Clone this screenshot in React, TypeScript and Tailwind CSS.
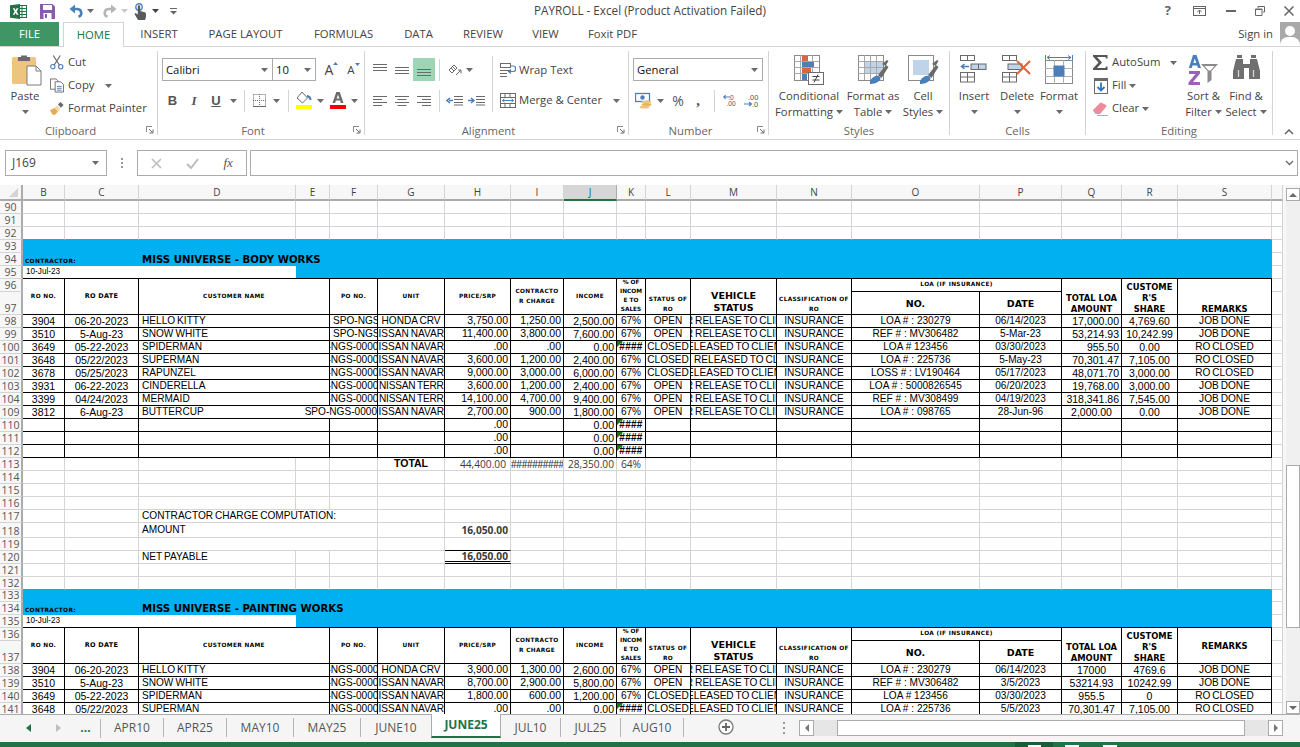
import React from "react";

const Caret = ({ c = "#6a6a6a" }: { c?: string }) => (
  <svg width="7" height="4" viewBox="0 0 7 4" className="shrink-0"><path d="M0 0h7L3.5 4z" fill={c} /></svg>
);
const Launcher = () => (
  <svg width="8" height="8" viewBox="0 0 8 8" className="absolute right-[3px] bottom-[1px]"><path d="M.5 6V.5H6" fill="none" stroke="#8a8a8a" /><path d="M3 3l3.5 3.5M7 3.5V7H3.5" fill="none" stroke="#6a6a6a" /></svg>
);
const Sep = ({ h = "h-[22px]" }: { h?: string }) => <div className={`${h} w-px bg-[#d4d4d4]`} />;

const ExcelLogo = () => (
  <svg width="17" height="15" viewBox="0 0 17 15"><rect x="8" y="1.5" width="8.5" height="12" fill="#fff" stroke="#217346" /><path d="M8 4.5h8M8 7.5h8M8 10.5h8M12 2v11" stroke="#217346" /><path d="M0 1.2L10 0v15L0 13.8z" fill="#217346" /><path d="M2.8 4.2h1.9l.9 2 1-2h1.8L6.7 7.5l1.8 3.3H6.600l-1-2.100-1 2.100H2.800l1.800-3.300z" fill="#fff" /></svg>
);
const SaveIcon = () => (
  <svg width="15" height="15" viewBox="0 0 15 15"><path d="M0 0h12.500L15 2.500V15H0z" fill="#8b5bab" /><rect x="3" y="1" width="9" height="5" fill="#fff" /><rect x="3.500" y="9" width="8" height="6" fill="#fff" /><rect x="5" y="10" width="2" height="4" fill="#8b5bab" /></svg>
);
const Undo = ({ c, flip }: { c: string; flip?: boolean }) => (
  <svg width="14" height="15" viewBox="0 0 14 15" className={flip ? "-scale-x-100" : ""}><path d="M3 5h5.500a4 4 0 0 1 1 7.800" fill="none" stroke={c} strokeWidth="2.600" /><path d="M6 .5v9L.5 5z" fill={c} /></svg>
);
const Touch = () => (
  <svg width="14" height="17" viewBox="0 0 14 17"><circle cx="6" cy="4" r="3.200" fill="none" stroke="#4a86c5" strokeWidth="1.400" /><path d="M4.800 3.500a1.200 1.200 0 0 1 2.400 0V8l4.500 1.200c1 .3 1.300 1 1.300 2V14l-1 3H5L1.500 11l1-1 2.300 1.500z" fill="#5a5a5a" /></svg>
);

const PasteIcon = () => (
  <svg width="30" height="32" viewBox="0 0 30 32"><rect x="0" y="3" width="24" height="27" rx="1.500" fill="#edc57f" /><path d="M6 3h3V1.500h6V3h3v4H6z" fill="#6a6a6a" /><path d="M15 12h9l5 5v14H15z" fill="#fff" stroke="#7a7a7a" /><path d="M24 12v5h5" fill="none" stroke="#7a7a7a" /></svg>
);
const CutIcon = () => (
  <svg width="15" height="15" viewBox="0 0 15 15"><circle cx="3" cy="12" r="2.300" fill="none" stroke="#4a7fba" strokeWidth="1.200" /><circle cx="11.500" cy="12" r="2.300" fill="none" stroke="#4a7fba" strokeWidth="1.200" /><path d="M4.500 10.200L11 0M10 10.200L3.500 0" stroke="#6a6a6a" strokeWidth="1.300" /></svg>
);
const CopyIcon = () => (
  <svg width="15" height="15" viewBox="0 0 15 15"><path d="M.5.500h6l2 2v9h-8z" fill="#fff" stroke="#6a6a6a" /><path d="M5.500 3.500h6l3 3v8h-9z" fill="#fff" stroke="#6a6a6a" /><path d="M7.500 8.500h5M7.500 10.500h5M7.500 12.500h5" stroke="#4a7fba" /></svg>
);
const BrushIcon = () => (
  <svg width="16" height="15" viewBox="0 0 16 15"><path d="M9 3l3-3 3.500 3.500-3 3z" fill="#6a6a6a" /><path d="M8 4l4 4-3 3-4-4z" fill="#f0d9a8" /><path d="M5 7l4 4-3 3.500H3L0 9.500z" fill="#e9a94e" /></svg>
);
const FillIcon = () => (
  <svg width="17" height="17" viewBox="0 0 17 17"><path d="M6 0l5.500 6-5 5L1 6z" fill="#fff" stroke="#6a6a6a" /><path d="M11 3c3 .5 4.500 2 4.500 5h-2c0-1.500-1-2.500-2.500-3z" fill="#4a7fba" /><rect x="0" y="13" width="16" height="4" fill="#ffff00" /></svg>
);
const FontColor = () => (
  <svg width="16" height="17" viewBox="0 0 16 17"><path d="M6.300 0h3.400L13.500 11h-2.600l-.8-2.500H5.900L5.100 11H2.500zM6.600 6.500h2.800L8 2.500z" fill="#6a6a6a" /><rect x="0" y="13" width="16" height="4" fill="#ff0000" /></svg>
);
const BorderIcon = () => (
  <svg width="13" height="13" viewBox="0 0 13 13"><path d="M.5.500h12v12M.5.500v12M6.500 0v13M0 6.500h13" fill="none" stroke="#6a6a6a" strokeDasharray="1 1" /><path d="M0 12.500h13" stroke="#6a6a6a" /></svg>
);
const Lines = ({ a }: { a: "l" | "c" | "r" }) => {
  const s = [14, 9, 14, 9];
  return (
    <svg width="14" height="12" viewBox="0 0 14 12">
      {s.map((w, i) => {
        const x = a === "l" ? 0 : a === "r" ? 14 - w : (14 - w) / 2;
        return <path key={i} d={`M${x} ${i * 3 + 1.5}h${w}`} stroke="#6a6a6a" />;
      })}
    </svg>
  );
};
const VLines = ({ n }: { n: number }) => (
  <svg width="14" height="12" viewBox="0 0 14 12">
    {Array.from({ length: 3 }).map((_, i) => <path key={i} d={`M0 ${n + i * 3 + 0.5}h14`} stroke="#6a6a6a" />)}
  </svg>
);
const Indent = ({ out }: { out?: boolean }) => (
  <svg width="17" height="11" viewBox="0 0 17 11"><path d="M8 1.500h9M8 4.500h9M8 7.500h9M8 10h9" stroke="#6a6a6a" /><path d={out ? "M7 5.500H3M4 3L1 5.500 4 8" : "M0 5.500h5M3 3l3 2.500L3 8"} stroke="#4a7fba" strokeWidth="1.500" fill="none" /></svg>
);
const Orient = () => (
  <svg width="16" height="15" viewBox="0 0 16 15"><path d="M2 8l5-5 3 3-5 5z" fill="#fff" stroke="#6a6a6a" /><path d="M4 6l3 3M5.500 4.500l3 3" stroke="#6a6a6a" /><path d="M9 13l5-5M14 8v3.500M14 8h-3" stroke="#6a6a6a" fill="none" /></svg>
);
const WrapIcon = () => (
  <svg width="16" height="15" viewBox="0 0 16 15"><rect x=".5" y=".5" width="10" height="4" fill="#fff" stroke="#6a6a6a" /><path d="M0 7.500h11M0 10.500h7M0 13.500h7" stroke="#6a6a6a" /><path d="M11 3h2.500q2 0 2 2v1.500q0 2-2 2H9M11 6.500L8.500 8.500l2.500 2" fill="none" stroke="#4a7fba" strokeWidth="1.200" /></svg>
);
const MergeIcon = () => (
  <svg width="16" height="15" viewBox="0 0 16 15"><rect x=".5" y=".5" width="15" height="14" fill="#fff" stroke="#6a6a6a" /><path d="M0 4.500h16M0 10.500h16M5 0v4.500M10 0v4.500M5 10.500V15M10 10.500V15" stroke="#6a6a6a" /><path d="M2.500 7.500h11M4.500 5.800L2.500 7.500l2 1.700M11.500 5.800l2 1.700-2 1.700" fill="none" stroke="#4a7fba" /></svg>
);
const Currency = () => (
  <svg width="18" height="17" viewBox="0 0 18 17"><rect x=".5" y="1.500" width="14" height="8" fill="#fff" stroke="#4a7fba" strokeWidth="1.300" /><circle cx="7.500" cy="5.500" r="2.200" fill="#4a7fba" /><ellipse cx="11.500" cy="10" rx="5" ry="1.600" fill="#edc57f" /><ellipse cx="11.500" cy="12.500" rx="5" ry="1.600" fill="#e9b45c" /><ellipse cx="9.500" cy="15" rx="5" ry="1.600" fill="#edc57f" /></svg>
);
const Dec = ({ more }: { more?: boolean }) => (
  <svg width="16" height="15" viewBox="0 0 16 15">
    <text x={more ? 4 : 6} y="6.500" fontSize="7.500" fontFamily="Liberation Sans, sans-serif" fill="#555">{more ? ".00" : ".0"}</text>
    <text x={more ? 8 : 4} y="14" fontSize="7.500" fontFamily="Liberation Sans, sans-serif" fill="#555">{more ? ".0" : ".00"}</text>
    <path d={more ? "M0 11h7M5 9l2.500 2L5 13" : "M8 3.500H1M3 1.500L.8 3.500 3 5.500"} stroke="#4a7fba" strokeWidth="1.200" fill="none" />
  </svg>
);
const CellGrid = ({ shade }: { shade?: string }) => (
  <g>
    <rect x=".5" y=".5" width="25" height="25" fill="#fff" stroke="#8a8a8a" />
    {shade && <path d={shade} fill="#bfd3e9" />}
    <path d="M0 6.500h25M0 12.500h25M0 18.500h25M6.500 0v25M12.500 0v25M18.500 0v25" stroke="#a8a8a8" />
  </g>
);
const Conditional = () => (
  <svg width="31" height="31" viewBox="0 0 31 31">
    <CellGrid />
    <rect x="8" y="1" width="6" height="5" fill="#e0643a" />
    <rect x="8" y="7" width="12" height="5" fill="#4a7fba" />
    <rect x="8" y="13" width="9" height="5" fill="#e0643a" />
    <rect x="8" y="19" width="5" height="6" fill="#4a7fba" />
    <rect x="14.500" y="17.500" width="15" height="12" fill="#fff" stroke="#6a6a6a" />
    <path d="M18.500 21.500h7M18.500 25h7M24 19.500l-4 8" stroke="#444" />
  </svg>
);
const Brush = () => (
  <g>
    <path d="M20 20l8-10 2.500 2-7 11z" fill="#6a6a6a" />
    <path d="M24 9l5-4 1.500 1-3 5z" fill="#6a6a6a" />
    <path d="M12 26c2-4 6-6 9-5 2 1 2 4 0 5-2 2-5 3-9 3z" fill="#4a7fba" />
  </g>
);
const TableStyle = () => (
  <svg width="31" height="31" viewBox="0 0 31 31"><CellGrid shade="M6 6h19v13H6z" /><Brush /></svg>
);
const CellStyle = () => (
  <svg width="31" height="31" viewBox="0 0 31 31"><rect x=".5" y=".5" width="25" height="25" fill="#fff" stroke="#8a8a8a" /><rect x="5" y="5" width="16" height="15" fill="#bfd3e9" /><Brush /></svg>
);
const InsertIcon = () => (
  <svg width="28" height="28" viewBox="0 0 28 28"><rect x=".5" y=".5" width="14" height="5" fill="#fff" stroke="#6a6a6a" /><path d="M7.500 0v6" stroke="#6a6a6a" /><rect x="11" y="9" width="15" height="5.500" fill="#bfd3e9" stroke="#6a6a6a" /><path d="M18.500 9v5.500" stroke="#6a6a6a" /><path d="M9 11.500H2M4.500 9L1.500 11.500 4.500 14" fill="none" stroke="#4a7fba" strokeWidth="1.500" /><rect x=".5" y="17.500" width="14" height="9.500" fill="#fff" stroke="#6a6a6a" /><path d="M0 22h15M7.500 17v10" stroke="#6a6a6a" /></svg>
);
const DeleteIcon = () => (
  <svg width="31" height="28" viewBox="0 0 31 28"><rect x=".5" y=".5" width="14" height="5" fill="#fff" stroke="#6a6a6a" /><path d="M7.500 0v6" stroke="#6a6a6a" /><rect x="6" y="9" width="14" height="5.500" fill="#bfd3e9" stroke="#6a6a6a" /><rect x=".5" y="17.500" width="14" height="9.500" fill="#fff" stroke="#6a6a6a" /><path d="M0 22h15M7.500 17v10" stroke="#6a6a6a" /><path d="M15 6l13 13M28 6L15 19" stroke="#e0643a" strokeWidth="2" /></svg>
);
const FormatIcon = () => (
  <svg width="28" height="31" viewBox="0 0 28 31"><path d="M.5 0v5M27.500 0v5M2 2.500h24M5 .5L2 2.500l3 2M23 .5l3 2-3 2" fill="none" stroke="#4a7fba" /><rect x=".5" y="5.500" width="27" height="23" fill="#fff" stroke="#8a8a8a" /><path d="M9.500 5v24M18.500 5v24M0 13.500h28M0 21.500h28" stroke="#b0b0b0" /><rect x="8.500" y="10.500" width="11" height="11" fill="#4a7fba" /></svg>
);
const Sigma = () => (
  <svg width="15" height="15" viewBox="0 0 15 15"><path d="M0 0h14.500v3.500h-1.500L12.500 2H4l5 5.500L4 13h8.500l.5-1.500h1.500V15H0v-1.500L5.500 7.500 0 1.500z" fill="#555" /></svg>
);
const FillDown = () => (
  <svg width="14" height="16" viewBox="0 0 14 16"><rect x=".5" y=".5" width="13" height="15" fill="#fff" stroke="#6a6a6a" /><rect x="0" y="0" width="14" height="3" fill="#6a6a6a" /><path d="M7 4.500v8M3.500 9L7 12.500 10.500 9" fill="none" stroke="#2f76bd" strokeWidth="1.800" /></svg>
);
const Eraser = () => (
  <svg width="15" height="14" viewBox="0 0 15 14"><path d="M0 8l7-7q1-1 2 0l4 2q1 1 0 2L7 12H3z" fill="#ef8a9a" /><path d="M0 8l4 3-1 1zM4 13.500h11" stroke="#b0b0b0" fill="none" /></svg>
);
const SortIcon = () => (
  <svg width="31" height="31" viewBox="0 0 31 31"><path d="M5 0h3.500L13 13h-3l-.8-2.500H4.500L3.700 13H.8zM5.300 8h3L6.800 3.500z" fill="#4a7fba" /><path d="M1 16h11v2.500L5 27h7v3H.5v-2.500L7.500 19H1z" fill="#9a63b5" /><path d="M13 9h17l-6.500 7v9l-4 3V16z" fill="#8a8a8a" /><path d="M16.500 11h10l-4 4.500h-2z" fill="#fff" /></svg>
);
const Binoc = () => (
  <svg width="27" height="24" viewBox="0 0 27 24"><path d="M4 0h5v3H4zM18 0h5v3h-5z" fill="#6f6f6f" /><path d="M3 4h7v5h7V4h7l3 12v8H16V13h-5v11H0v-8z" fill="#6f6f6f" /><path d="M5.500 15v7M20.500 15v7" stroke="#d4d4d4" strokeWidth="1.300" /></svg>
);

const Small = ({ icon, label, caret, w = "w-[15px]", mr = "mr-[4px]", ml = "ml-0" }: { icon: React.ReactNode; label: string; caret?: boolean; w?: string; mr?: string; ml?: string }) => (
  <div className="flex h-[23px] items-center whitespace-nowrap">
    <div className={`flex ${w} ${mr} justify-center`}>{icon}</div>
    <span>{label}</span>
    {caret && <span className={`${ml} flex`}><Caret /></span>}
  </div>
);
const Large = ({ icon, l1, l2, w }: { icon: React.ReactNode; l1: string; l2?: string; w: string }) => (
  <div className={`flex ${w} shrink-0 flex-col items-center whitespace-nowrap`}>
    <div className="flex h-[37px] items-start justify-center pt-[4px]">{icon}</div>
    <div className="h-[16px] leading-[16px]">{l1}</div>
    <div className="flex h-[16px] items-center gap-[3px] leading-[16px]">{l2 && <span>{l2}</span>}<Caret /></div>
  </div>
);
const Group = ({ w, label, launcher, children }: { w: string; label: string; launcher?: boolean; children: React.ReactNode }) => (
  <div className={`relative flex ${w} shrink-0 flex-col border-r border-[#d4d4d4]`}>
    <div className="flex h-[72px] items-start">{children}</div>
    <div className={`h-[12px] text-center leading-[16px] text-[#666] ${launcher ? "pr-[16px]" : ""}`}>{label}</div>
    {launcher && <Launcher />}
  </div>
);
const Slot = ({ w, children, cls = "" }: { w: string; children?: React.ReactNode; cls?: string }) => (
  <div className={`flex ${w} h-[23px] shrink-0 items-center justify-center ${cls}`}>{children}</div>
);
const Combo = ({ w, text }: { w: string; text: string }) => (
  <div className={`flex ${w} h-[23px] shrink-0 items-center justify-between border border-[#ababab] bg-white pt-px pr-[4px] pl-[3px] text-[#111]`}>
    <span>{text}</span><Caret />
  </div>
);
const TabT = ({ w, t }: { w: string; t: string }) => <div className={`${w} shrink-0 text-center`}>{t}</div>;

/* ---- Sheet ---- */
const txt = "text-[10.1px] leading-none text-black font-['Liberation_Sans',sans-serif]";
const hd6 = "font-['DejaVu_Sans',sans-serif] font-bold text-[5.8px] leading-[9.5px] tracking-[0.35px] text-center text-black";
const hd8 = "font-['DejaVu_Sans',sans-serif] font-bold text-[8.4px] leading-[11px] text-center text-black -mb-px";
const hd9 = "font-['DejaVu_Sans',sans-serif] font-bold text-[9.5px] leading-[12px] text-center text-black";
const ws = "[word-spacing:-0.8px]";
const numCell = "!text-[10.5px]";

const RH = ({ n }: { n: number }) => (
  <div className="flex items-end justify-center overflow-hidden border-r-2 border-b border-r-[#ababab] border-b-[#d4d4d4] bg-[#f7f7f7] font-['Open_Sans',sans-serif] text-[10.5px] leading-[12px] text-[#555]">{n}</div>
);
const G = ({ cls = "", children }: { cls?: string; children?: React.ReactNode }) => (
  <div className={`flex min-w-0 items-center overflow-hidden border-r border-b border-[#d4d4d4] whitespace-nowrap ${txt} ${cls}`}>{children}</div>
);
const K = ({ cls = "", children }: { cls?: string; children?: React.ReactNode }) => (
  <div className={`flex min-w-0 items-center overflow-hidden border-r border-b border-black whitespace-nowrap ${txt} ${cls}`}>{children}</div>
);
const Tri = () => <svg width="6" height="6" viewBox="0 0 6 6" className="absolute top-0 left-0"><path d="M0 0h6L0 6z" fill="#107c10" /></svg>;
const Hash = () => (
  <K cls="relative justify-center pt-px font-bold tracking-[0.2px]"><Tri />####</K>
);

const ColHead = ({ t, cls = "" }: { t: string; cls?: string }) => (
  <div className={`flex items-center justify-center border-r border-b-2 border-r-[#d4d4d4] border-b-[#ababab] bg-[#f7f7f7] font-['Open_Sans',sans-serif] text-[10px] text-[#444] ${cls}`}>{t}</div>
);
const Plain = ({ n, tail }: { n: number; tail?: boolean }) => (
  <>
    <RH n={n} />
    {Array.from({ length: 19 }).map((_, i) => <G key={i} cls={tail && i < 18 ? "border-b-[#00b0f0]" : ""} />)}
  </>
);
const Banner = ({ n1, n2, n3, title }: { n1: number; n2: number; n3: number; title: string }) => (
  <>
    <RH n={n1} />
    <div className="col-span-18 bg-[#00b0f0]" />
    <G />
    <RH n={n2} />
    <div className="col-span-2 flex items-end overflow-hidden bg-[#00b0f0] pb-[1px] pl-[2px] font-['DejaVu_Sans',sans-serif] text-[5.9px] leading-[8px] font-bold tracking-[0.3px] whitespace-nowrap text-black">CONTRACTOR:</div>
    <div className="col-span-16 flex items-center bg-[#00b0f0] pl-[3px] font-['DejaVu_Sans',sans-serif] text-[10.2px] font-bold whitespace-nowrap text-black">{title}</div>
    <G />
    <RH n={n3} />
    <div className="col-span-3 flex items-center border-b border-black bg-white pl-[3px] font-['Liberation_Sans',sans-serif] text-[8.2px] text-black">10-Jul-23</div>
    <div className="col-span-15 border-b border-black bg-[#00b0f0]" />
    <G />
  </>
);
const Header = ({ n1, n2, remarksCenter }: { n1: number; n2: number; remarksCenter?: boolean }) => {
  const c = "row-span-2 justify-center whitespace-normal";
  return (
    <>
      <RH n={n1} />
      <K cls={c}><span className={hd6}>RO NO.</span></K>
      <K cls={c}><span className="font-['DejaVu_Sans',sans-serif] text-[6.5px] font-bold tracking-[0.3px] text-black">RO DATE</span></K>
      <K cls={`${c} col-span-2`}><span className={hd6}>CUSTOMER NAME</span></K>
      <K cls={c}><span className={hd6}>PO NO.</span></K>
      <K cls={c}><span className={hd6}>UNIT</span></K>
      <K cls={c}><span className={hd6}>PRICE/SRP</span></K>
      <K cls={c}><span className={hd6}>CONTRACTO<br />R CHARGE</span></K>
      <K cls={c}><span className={hd6}>INCOME</span></K>
      <K cls={`${c} !items-end`}><span className="text-center font-['DejaVu_Sans',sans-serif] text-[5.8px] leading-[8.9px] font-bold text-black">% OF<br />INCOM<br />E TO<br />SALES</span></K>
      <K cls={`${c} !items-end`}><span className={hd6}>STATUS OF<br />RO</span></K>
      <K cls={`${c} !items-end`}><span className={hd9}>VEHICLE<br />STATUS</span></K>
      <K cls={`${c} !items-end`}><span className={hd6}>CLASSIFICATION OF<br />RO</span></K>
      <K cls="col-span-2 justify-center"><span className={hd6}>LOA (IF INSURANCE)</span></K>
      <K cls={`${c} !items-end`}><span className={hd8}>TOTAL LOA<br />AMOUNT</span></K>
      <K cls={`${c} !items-end`}><span className={hd8}>CUSTOME<br />R'S<br />SHARE</span></K>
      <K cls={`${c} ${remarksCenter ? "" : "!items-end"}`}><span className={hd8}>REMARKS</span></K>
      <G />
      <RH n={n2} />
      <K cls="justify-center pt-[2px]"><span className={hd9}>NO.</span></K>
      <K cls="justify-center pt-[2px]"><span className={hd9}>DATE</span></K>
      <G />
    </>
  );
};
type D = { n: number; v: string[] };
const Row = ({ n, v }: D) => {
  const [b, c, d, f, g, h, i, j, k, l, m, n2, o, p, q, r, s] = v;
  return (
    <>
      <RH n={n} />
      <K cls={`justify-center pt-px ${numCell}`}>{b}</K>
      <K cls={`justify-center pt-px ${numCell}`}>{c}</K>
      {f === "@R" ? (
        <K cls={`col-span-3 justify-between pt-px pl-[3px] ${ws}`}><span>{d}</span><span>SPO-NGS-0000</span></K>
      ) : (
        <>
          <K cls={`col-span-2 pt-px pl-[3px] ${ws}`}>{d}</K>
          {f === "@L" ? <K cls="pt-px pl-[3px]">SPO-NGS-00001234</K> : <K cls="justify-center pt-px">{f}</K>}
        </>
      )}
      <K cls={`pt-px ${ws} ${g.startsWith("@") ? "pl-[1px] tracking-[-0.2px]" : "justify-center"}`}>{g.replace("@", "")}</K>
      <K cls={`justify-end pr-[2px] pb-[2px] ${numCell}`}>{h}</K>
      <K cls={`justify-end pr-[2px] pb-[1px] ${numCell}`}>{i}</K>
      <K cls={`justify-end pt-px pr-[2px] ${numCell}`}>{j}</K>
      {k === "####" ? <Hash /> : <K cls="justify-center pt-px">{k}</K>}
      <K cls="justify-center pt-px">{l}</K>
      <K cls={`pt-px ${ws} ${m.startsWith("@") ? "pl-[3px]" : "justify-center"}`}>{m.replace("@", "")}</K>
      <K cls="justify-center pt-px">{n2}</K>
      <K cls="justify-center pt-px">{o}</K>
      <K cls="justify-center pt-px">{p}</K>
      <K cls={`pt-px ${numCell} ${q.startsWith("=") ? "justify-center" : "justify-end pr-[2px]"}`}>{q.replace("=", "")}</K>
      <K cls={`justify-center pt-px ${numCell}`}>{r}</K>
      <K cls={`justify-center pt-px ${ws}`}>{s}</K>
      <G />
    </>
  );
};
const FOR = "FOR RELEASE TO CLIENT", REL = "RELEASED TO CLIENT", INS = "INSURANCE", NGS = "SPO-NGS-00001234", NAV = "NISSAN NAVARA", TER = "NISSAN TERRA", DONE = "JOB DONE", CL = "RO CLOSED";
const A: D[] = [
  { n: 98, v: ["3904", "06-20-2023", "HELLO KITTY", "@L", "HONDA CRV", "3,750.00", "1,250.00", "2,500.00", "67%", "OPEN", FOR, INS, "LOA # : 230279", "06/14/2023", "17,000.00", "4,769.60", DONE] },
  { n: 99, v: ["3510", "5-Aug-23", "SNOW WHITE", "@L", NAV, "11,400.00", "3,800.00", "7,600.00", "67%", "OPEN", FOR, INS, "REF # : MV306482", "5-Mar-23", "53,214.93", "10,242.99", DONE] },
  { n: 100, v: ["3649", "05-22-2023", "SPIDERMAN", NGS, NAV, ".00", ".00", "0.00", "####", "CLOSED", REL, INS, "LOA # 123456", "03/30/2023", "955.50", "0.00", CL] },
  { n: 101, v: ["3648", "05/22/2023", "SUPERMAN", NGS, NAV, "3,600.00", "1,200.00", "2,400.00", "67%", "CLOSED", "@" + REL, INS, "LOA # : 225736", "5-May-23", "70,301.47", "7,105.00", CL] },
  { n: 102, v: ["3678", "05/25/2023", "RAPUNZEL", NGS, NAV, "9,000.00", "3,000.00", "6,000.00", "67%", "CLOSED", REL, INS, "LOSS # : LV190464", "05/17/2023", "48,071.70", "3,000.00", CL] },
  { n: 103, v: ["3931", "06-22-2023", "CINDERELLA", NGS, "@" + TER, "3,600.00", "1,200.00", "2,400.00", "67%", "OPEN", FOR, INS, "LOA # : 5000826545", "06/20/2023", "19,768.00", "3,000.00", DONE] },
  { n: 104, v: ["3399", "04/24/2023", "MERMAID", NGS, "@" + TER, "14,100.00", "4,700.00", "9,400.00", "67%", "OPEN", FOR, INS, "REF # : MV308499", "04/19/2023", "318,341.86", "7,545.00", DONE] },
  { n: 109, v: ["3812", "6-Aug-23", "BUTTERCUP", "@R", NAV, "2,700.00", "900.00", "1,800.00", "67%", "OPEN", FOR, INS, "LOA # : 098765", "28-Jun-96", "=2,000.00", "0.00", DONE] },
  { n: 110, v: ["", "", "", "", "", ".00", "", "0.00", "####", "", "", "", "", "", "", "", ""] },
  { n: 111, v: ["", "", "", "", "", ".00", "", "0.00", "####", "", "", "", "", "", "", "", ""] },
  { n: 112, v: ["", "", "", "", "", ".00", "", "0.00", "####", "", "", "", "", "", "", "", ""] },
];
const B: D[] = [
  { n: 138, v: ["3904", "06-20-2023", "HELLO KITTY", NGS, "HONDA CRV", "3,900.00", "1,300.00", "2,600.00", "67%", "OPEN", FOR, INS, "LOA # : 230279", "06/14/2023", "=17000", "4769.6", DONE] },
  { n: 139, v: ["3510", "5-Aug-23", "SNOW WHITE", NGS, NAV, "8,700.00", "2,900.00", "5,800.00", "67%", "OPEN", FOR, INS, "REF # : MV306482", "3/5/2023", "=53214.93", "10242.99", DONE] },
  { n: 140, v: ["3649", "05-22-2023", "SPIDERMAN", NGS, NAV, "1,800.00", "600.00", "1,200.00", "67%", "CLOSED", REL, INS, "LOA # 123456", "03/30/2023", "=955.5", "0", CL] },
  { n: 141, v: ["3648", "05/22/2023", "SUPERMAN", NGS, NAV, ".00", ".00", "0.00", "####", "CLOSED", REL, INS, "LOA # : 225736", "5/5/2023", "=70,301.47", "7,105.00", CL] },
];
const num = "font-['Open_Sans',sans-serif] !text-[10.2px] !text-[#3a3a3a]";
const Blanks = ({ n }: { n: number }) => <>{Array.from({ length: n }).map((_, i) => <G key={i} />)}</>;

const Sheet = () => (
  <div className="grid h-[529px] w-[1283px] shrink-0 grid-cols-[23px_42px_74px_157px_34px_48px_67px_66px_53px_53px_29px_45px_86px_75px_128px_82px_60px_56px_94px_11px] grid-rows-[16px_repeat(7,13px)_23px_repeat(16,13px)_15px_repeat(4,13px)_12px_repeat(3,13px)_23px_repeat(4,13px)] overflow-hidden bg-white">
    <div className="flex items-end justify-end border-r-2 border-b-2 border-r-[#ababab] border-b-[#ababab] bg-[#f7f7f7] pr-[3px] pb-[2px]">
      <svg width="9" height="9" viewBox="0 0 9 9"><path d="M9 0v9H0z" fill="#d4d4d4" /></svg>
    </div>
    {["B", "C", "D", "E", "F", "G", "H", "I"].map((t) => <ColHead key={t} t={t} />)}
    <div className="flex items-center justify-center border-r border-b-2 border-r-[#ababab] border-b-[#217346] bg-[#d6d6d6] font-['Open_Sans',sans-serif] text-[10px] text-[#217346]">J</div>
    {["K", "L", "M", "N", "O", "P", "Q", "R", "S"].map((t) => <ColHead key={t} t={t} />)}
    <ColHead t="" />

    <Plain n={90} /><Plain n={91} /><Plain n={92} tail />
    <Banner n1={93} n2={94} n3={95} title="MISS UNIVERSE - BODY WORKS" />
    <Header n1={96} n2={97} />
    {A.map((r) => <Row key={r.n} {...r} />)}

    <RH n={113} />
    <Blanks n={5} />
    <G cls="justify-center pb-[1px] font-['DejaVu_Sans',sans-serif] !text-[10.5px] font-bold">TOTAL</G>
    <G cls={`justify-end pr-[4px] ${num}`}>44,400.00</G>
    <G cls={`justify-center ${num} !text-[9px] tracking-[-1.3px]`}>##########</G>
    <G cls={`justify-end pr-[2px] ${num}`}>28,350.00</G>
    <G cls={`justify-center ${num}`}>64%</G>
    <Blanks n={9} />

    <Plain n={114} /><Plain n={115} /><Plain n={116} />

    <RH n={117} /><Blanks n={2} />
    <G cls={`col-span-3 pl-[3px] ${ws}`}>CONTRACTOR CHARGE COMPUTATION:</G>
    <Blanks n={14} />
    <RH n={118} /><Blanks n={2} />
    <G cls="col-span-3 pl-[3px]">AMOUNT</G>
    <G />
    <G cls={`justify-end pr-[2px] font-bold ${num}`}>16,050.00</G>
    <Blanks n={12} />
    <RH n={119} /><Blanks n={2} />
    <G cls="col-span-3" />
    <G />
    <G cls="border-b-black" />
    <Blanks n={12} />
    <RH n={120} /><Blanks n={2} />
    <G cls={`pl-[3px] ${ws}`}>NET PAYABLE</G>
    <Blanks n={3} />
    <div className={`flex items-center justify-end border-r border-b-[3px] border-r-[#d4d4d4] border-b-black pt-[2px] pr-[2px] font-bold ${num} [border-bottom-style:double]`}>16,050.00</div>
    <Blanks n={12} />
    <Plain n={121} /><Plain n={132} tail />

    <Banner n1={133} n2={134} n3={135} title="MISS UNIVERSE - PAINTING WORKS" />
    <Header n1={136} n2={137} remarksCenter />
    {B.map((r) => <Row key={r.n} {...r} />)}
  </div>
);

const VScroll = () => (
  <div className="flex w-[17px] shrink-0 flex-col bg-[#f7f7f7] pt-[3px] pl-[3px]">
    <div className="flex h-[13px] items-center justify-center border border-[#ababab] bg-white"><svg width="8" height="4" viewBox="0 0 8 4"><path d="M4 0l4 4H0z" fill="#6a6a6a" /></svg></div>
    <div className="flex flex-1 flex-col bg-[#f0f0f0]">
      <div className="h-[264px]" />
      <div className="h-[163px] border border-[#ababab] bg-white" />
      <div className="flex-1" />
    </div>
    <div className="flex h-[13px] items-center justify-center border border-[#ababab] bg-white"><svg width="8" height="4" viewBox="0 0 8 4"><path d="M0 0h8L4 4z" fill="#6a6a6a" /></svg></div>
  </div>
);

const SheetTab = ({ w, t }: { w: string; t: string }) => (
  <div className={`flex ${w} h-[19px] shrink-0 items-center justify-center border-r border-[#b5b5b5]`}>{t}</div>
);
const TabsBar = () => (
  <div className="flex h-[28px] shrink-0 items-start border-t border-[#ababab] bg-[#f5f5f5] font-['Open_Sans',sans-serif] text-[12px] text-[#555]">
    <div className="flex h-[23px] w-[101px] shrink-0 items-center pt-[3px]">
      <div className="flex w-[56px] justify-end pr-[25px]"><svg width="5" height="8" viewBox="0 0 5 8"><path d="M5 0v8L0 4z" fill="#217346" /></svg></div>
      <div className="flex w-[15px] justify-start"><svg width="5" height="8" viewBox="0 0 5 8"><path d="M0 0v8l5-4z" fill="#bdbdbd" /></svg></div>
      <div className="flex h-[19px] w-[30px] items-center justify-center border-r border-[#b5b5b5] font-bold text-[#217346]">...</div>
    </div>
    <div className="flex pt-[3px]">
      <SheetTab w="w-[63px]" t="APR10" />
      <SheetTab w="w-[63px]" t="APR25" />
      <SheetTab w="w-[67px]" t="MAY10" />
      <SheetTab w="w-[67px]" t="MAY25" />
      <div className="flex h-[19px] w-[70px] shrink-0 items-center justify-center">JUNE10</div>
    </div>
    <div className="-mt-px flex h-[24px] w-[70px] shrink-0 items-center justify-center border-x border-b-2 border-x-[#ababab] border-b-[#217346] bg-white font-bold text-[#217346]">JUNE25</div>
    <div className="flex pt-[3px]">
      <SheetTab w="w-[60px]" t="JUL10" />
      <SheetTab w="w-[60px]" t="JUL25" />
      <SheetTab w="w-[63px]" t="AUG10" />
    </div>
    <div className="flex w-[84px] shrink-0 justify-center pt-[4px]">
      <svg width="16" height="16" viewBox="0 0 16 16"><circle cx="8" cy="8" r="7" fill="#fff" stroke="#777" strokeWidth="1.300" /><path d="M8 4v8M4 8h8" stroke="#666" strokeWidth="1.800" /></svg>
    </div>
    <div className="flex w-[31px] shrink-0 flex-col items-center gap-[3px] pt-[7px]">
      <div className="h-[2px] w-[2px] bg-[#999]" /><div className="h-[2px] w-[2px] bg-[#999]" /><div className="h-[2px] w-[2px] bg-[#999]" />
    </div>
    <div className="mt-[5px] flex h-[16px] w-[484px] shrink-0 bg-[#e6e6e6]">
      <div className="flex w-[15px] items-center justify-center border border-[#ababab] bg-white"><svg width="4" height="8" viewBox="0 0 4 8"><path d="M4 0v8L0 4z" fill="#777" /></svg></div>
      <div className="w-[23px]" />
      <div className="w-[408px] border border-[#ababab] bg-white" />
      <div className="w-[23px]" />
      <div className="flex w-[15px] items-center justify-center border border-[#ababab] bg-white"><svg width="4" height="8" viewBox="0 0 4 8"><path d="M0 0v8l4-4z" fill="#777" /></svg></div>
    </div>
  </div>
);

export default function App() {
  return (
    <div className="flex h-[747px] w-[1300px] flex-col overflow-hidden bg-white font-['Open_Sans',sans-serif] text-[11.300px] text-[#444]">
      {/* title bar */}
      <div className="flex h-[22px] shrink-0 items-center">
        <div className="flex w-[480px] shrink-0 items-center">
          <div className="ml-[10px] w-[30px]"><ExcelLogo /></div>
          <div className="w-[29px]"><SaveIcon /></div>
          <Undo c="#4a7fba" />
          <div className="ml-[4px] w-[16px]"><Caret /></div>
          <Undo c="#b5b5b5" flip />
          <div className="ml-[4px] w-[12px]"><Caret c="#c8c8c8" /></div>
          <Touch />
          <div className="ml-[5px] w-[14px]"><Caret c="#444" /></div>
          <svg width="7" height="7" viewBox="0 0 7 7" className="ml-[4px]"><path d="M0 .500h7" stroke="#666" /><path d="M0 3h7L3.500 6.500z" fill="#666" /></svg>
        </div>
        <div className="w-[340px] shrink-0 text-center text-[11.700px] text-[#444]">PAYROLL - Excel (Product Activation Failed)</div>
        <div className="flex flex-1 items-center justify-end">
          <span className="mr-[22px] text-[13px] font-bold text-[#666]">?</span>
          <svg width="13" height="10" viewBox="0 0 13 10" className="mr-[20px]"><rect x=".5" y=".5" width="12" height="9" fill="none" stroke="#666" /><path d="M0 2.500h13M6.500 8V4M4.500 6l2-2 2 2" fill="none" stroke="#666" /></svg>
          <svg width="10" height="2" viewBox="0 0 10 2" className="mr-[19px]"><path d="M0 1h10" stroke="#666" strokeWidth="2" /></svg>
          <svg width="10" height="10" viewBox="0 0 10 10" className="mr-[19px]"><path d="M3 2V.5h6.500V6H8M.5 3h6.500v6.500H.5z" fill="none" stroke="#666" /><path d="M1 3.500h6" stroke="#666" /></svg>
          <svg width="10" height="10" viewBox="0 0 10 10" className="mr-[6px]"><path d="M.5.500l9 9M9.500.500l-9 9" stroke="#666" strokeWidth="1.500" /></svg>
        </div>
      </div>
      {/* tabs */}
      <div className="flex h-[25px] shrink-0 items-stretch border-b border-[#d4d4d4]">
        <div className="flex w-[59px] shrink-0 items-center justify-center bg-[#409565] text-white">FILE</div>
        <div className="-mb-px ml-[4px] flex w-[61px] shrink-0 items-center justify-center border-x border-t border-[#d4d4d4] bg-white text-[#217346]">HOME</div>
        <div className="flex items-center">
          <TabT w="w-[70px]" t="INSERT" />
          <TabT w="w-[103px]" t="PAGE LAYOUT" />
          <TabT w="w-[93px]" t="FORMULAS" />
          <TabT w="w-[57px]" t="DATA" />
          <TabT w="w-[72px]" t="REVIEW" />
          <TabT w="w-[53px]" t="VIEW" />
          <TabT w="w-[81px]" t="Foxit PDF" />
        </div>
        <div className="flex flex-1 items-center justify-end">
          <span className="mr-[7px]">Sign in</span>
          <div className="h-[24px] w-[20px] overflow-hidden bg-[#a9a9a9]">
            <div className="mx-auto mt-[4px] h-[10px] w-[10px] rounded-full bg-white" />
            <div className="mx-auto mt-[1px] h-[12px] w-[20px] rounded-t-[8px] bg-white" />
          </div>
        </div>
      </div>
      {/* ribbon */}
      <div className="flex h-[93px] shrink-0 border-b border-[#d4d4d4] py-[4px]">
        <Group w="w-[158px]" label="Clipboard" launcher>
          <div className="flex w-[50px] shrink-0 flex-col items-center">
            <div className="flex h-[37px] items-start pt-[3px] pl-[3px]"><PasteIcon /></div>
            <div className="h-[16px] leading-[16px]">Paste</div>
            <div className="flex h-[16px] items-center"><Caret /></div>
          </div>
          <div className="flex flex-col">
            <Small icon={<CutIcon />} label="Cut" w="w-[14px]" />
            <Small icon={<CopyIcon />} label="Copy" w="w-[14px]" caret ml="ml-[11px]" />
            <Small icon={<BrushIcon />} label="Format Painter" w="w-[14px]" />
          </div>
        </Group>
        <Group w="w-[207px]" label="Font" launcher>
          <div className="flex flex-col pt-[7px] pl-[4px]">
            <div className="flex items-center">
              <Combo w="w-[111px]" text="Calibri" />
              <Combo w="w-[44px] -ml-px" text="10" />
              <Slot w="w-[22px] ml-[2px]"><span className="relative text-[14px] leading-none">A<svg width="5" height="3" viewBox="0 0 5 3" className="absolute -top-px -right-[5px]"><path d="M2.500 0L5 3H0z" fill="#4a7fba" /></svg></span></Slot>
              <Slot w="w-[22px]"><span className="relative text-[11.500px] leading-none">A<svg width="5" height="3" viewBox="0 0 5 3" className="absolute -top-px -right-[5px]"><path d="M0 0h5L2.500 3z" fill="#4a7fba" /></svg></span></Slot>
            </div>
            <div className="mt-[8px] flex items-center">
              <Slot w="w-[21px]" cls="font-['Liberation_Sans',sans-serif] text-[13px] font-bold text-[#555]">B</Slot>
              <Slot w="w-[22px]" cls="font-['Liberation_Serif',serif] text-[13px] font-bold text-[#555] italic">I</Slot>
              <Slot w="w-[22px]" cls="font-['Liberation_Sans',sans-serif] text-[13px] font-bold text-[#555] underline">U</Slot>
              <Slot w="w-[12px]"><Caret /></Slot>
              <Slot w="w-[10px]"><Sep /></Slot>
              <Slot w="w-[21px]"><BorderIcon /></Slot>
              <Slot w="w-[13px]"><Caret /></Slot>
              <Slot w="w-[10px]"><Sep /></Slot>
              <Slot w="w-[22px]"><FillIcon /></Slot>
              <Slot w="w-[11px]"><Caret /></Slot>
              <Slot w="w-[23px]"><FontColor /></Slot>
              <Slot w="w-[11px]"><Caret /></Slot>
            </div>
          </div>
        </Group>
        <Group w="w-[264px]" label="Alignment" launcher>
          <div className="flex flex-col pt-[7px] pl-[4px]">
            <div className="flex">
              <Slot w="w-[22px]"><VLines n={0} /></Slot>
              <Slot w="w-[22px]"><VLines n={3} /></Slot>
              <Slot w="w-[22px]" cls="bg-[#9fd5b7]"><VLines n={5} /></Slot>
              <Slot w="w-[8px]"><Sep /></Slot>
              <Slot w="w-[34px]" cls="gap-[3px]"><Orient /><Caret /></Slot>
            </div>
            <div className="mt-[8px] flex">
              <Slot w="w-[22px]"><Lines a="l" /></Slot>
              <Slot w="w-[22px]"><Lines a="c" /></Slot>
              <Slot w="w-[22px]"><Lines a="r" /></Slot>
              <Slot w="w-[8px]"><Sep /></Slot>
              <Slot w="w-[22px]"><Indent out /></Slot>
              <Slot w="w-[22px]"><Indent /></Slot>
            </div>
          </div>
          <div className="mt-[5px] ml-[5px] h-[56px] w-px shrink-0 bg-[#d4d4d4]" />
          <div className="flex flex-col pt-[7px] pl-[7px]">
            <div className="flex h-[23px] items-center gap-[3px] pt-px whitespace-nowrap"><WrapIcon /><span>Wrap Text</span></div>
            <div className="mt-[8px] flex h-[23px] items-center gap-[3px] whitespace-nowrap"><MergeIcon /><span>Merge &amp; Center</span><span className="ml-[8px] flex"><Caret /></span></div>
          </div>
        </Group>
        <Group w="w-[140px]" label="Number" launcher>
          <div className="flex flex-col pt-[7px] pl-[4px]">
            <Combo w="w-[130px]" text="General" />
            <div className="mt-[8px] flex items-center">
              <Slot w="w-[22px]"><Currency /></Slot>
              <Slot w="w-[10px]"><Caret /></Slot>
              <Slot w="w-[26px]" cls="text-[14px] leading-none text-[#555]">%</Slot>
              <Slot w="w-[14px]" cls="font-['Liberation_Serif',serif] text-[15px] font-bold text-[#555]">,</Slot>
              <Slot w="w-[18px]"><Sep /></Slot>
              <Slot w="w-[14px]"><Dec /></Slot>
              <Slot w="w-[30px]"><Dec more /></Slot>
            </div>
          </div>
        </Group>
        <Group w="w-[181px]" label="Styles">
          <div className="flex pl-[4px]">
            <Large w="w-[72px]" icon={<Conditional />} l1="Conditional" l2="Formatting" />
            <Large w="w-[56px]" icon={<TableStyle />} l1="Format as" l2="Table" />
            <Large w="w-[44px]" icon={<CellStyle />} l1="Cell" l2="Styles" />
          </div>
        </Group>
        <Group w="w-[136px]" label="Cells">
          <div className="flex pl-[2px]">
            <Large w="w-[44px]" icon={<InsertIcon />} l1="Insert" />
            <Large w="w-[42px]" icon={<DeleteIcon />} l1="Delete" />
            <Large w="w-[42px]" icon={<FormatIcon />} l1="Format" />
          </div>
        </Group>
        <Group w="w-[187px]" label="Editing">
          <div className="flex w-[97px] shrink-0 flex-col pl-[7px]">
            <Small icon={<Sigma />} label="AutoSum" caret ml="ml-[10px]" />
            <Small icon={<FillDown />} label="Fill" caret ml="ml-[3px]" />
            <Small icon={<Eraser />} label="Clear" caret ml="ml-[3px]" />
          </div>
          <Large w="w-[41px]" icon={<SortIcon />} l1="Sort &" l2="Filter" />
          <Large w="w-[44px]" icon={<Binoc />} l1="Find &" l2="Select" />
        </Group>
        <div className="flex flex-1 items-end justify-end pr-[6px]">
          <svg width="10" height="6" viewBox="0 0 10 6"><path d="M1 5l4-4 4 4" fill="none" stroke="#666" strokeWidth="1.500" /></svg>
        </div>
      </div>
      {/* formula bar */}
      <div className="flex h-[45px] shrink-0 items-start pt-[10px] pl-[5px]">
        <div className="flex h-[26px] w-[102px] shrink-0 items-center justify-between border border-[#ababab] pr-[7px] pl-[6px] text-[12px]">J169<Caret /></div>
        <div className="flex h-[26px] w-[30px] shrink-0 flex-col items-center justify-center gap-[2px]">
          <div className="h-[2px] w-[2px] bg-[#999]" /><div className="h-[2px] w-[2px] bg-[#999]" /><div className="h-[2px] w-[2px] bg-[#999]" />
        </div>
        <div className="flex h-[26px] w-[110px] shrink-0 items-center border border-[#ababab]">
          <div className="flex w-[37px] justify-center"><svg width="11" height="11" viewBox="0 0 11 11"><path d="M1 1l9 9M10 1l-9 9" stroke="#bdbdbd" strokeWidth="1.600" /></svg></div>
          <div className="flex w-[36px] justify-center"><svg width="13" height="11" viewBox="0 0 13 11"><path d="M1 6l4 4 7-9" fill="none" stroke="#bdbdbd" strokeWidth="2" /></svg></div>
          <div className="flex w-[36px] justify-center font-['Liberation_Serif',serif] text-[13px] text-[#555] italic">fx</div>
        </div>
        <div className="ml-[3px] flex h-[26px] w-[1048px] shrink-0 items-center justify-end border border-[#ababab] pr-[3px]">
          <svg width="9" height="6" viewBox="0 0 9 6"><path d="M1 1l3.500 3.500L8 1" fill="none" stroke="#666" strokeWidth="1.300" /></svg>
        </div>
      </div>
      {/* sheet */}
      <div className="flex h-[529px] shrink-0">
        <Sheet />
        <VScroll />
      </div>
      <TabsBar />
      {/* status */}
      <div className="flex h-[5px] shrink-0 items-end bg-[#217346]">
        <div className="ml-[1015px] flex h-[5px] w-[38px] items-end justify-center bg-[#1a5c38]"><div className="h-[2px] w-[13px] bg-white" /></div>
        <div className="ml-[12px] h-[2px] w-[14px] bg-white" />
        <div className="ml-[24px] h-[2px] w-[14px] bg-white" />
      </div>
    </div>
  );
}
